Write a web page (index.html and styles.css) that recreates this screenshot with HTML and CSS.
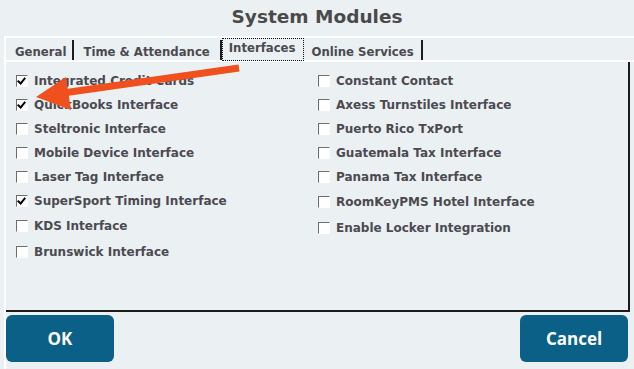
FILE: index.html
```html
<!DOCTYPE html>
<html lang="en">
  <head>
    <meta charset="UTF-8" />
    <title>System Modules</title>
    <link rel="stylesheet" href="styles.css">
  </head>
  <body>
    <div id="dialog">
      <h1 class="title">System Modules</h1>
      <div class="frame">
        <div class="tabs">
          <div class="tab general">General</div>
          <div class="tab time">Time &amp; Attendance</div>
          <div class="tab active">Interfaces</div>
          <div class="tab online">Online Services</div>
        </div>
        <div class="panel">
          <div class="col">
            <label class="opt"><span class="box checked"></span>Integrated Credit Cards</label>
            <label class="opt"><span class="box checked"></span>QuickBooks Interface</label>
            <label class="opt"><span class="box"></span>Steltronic Interface</label>
            <label class="opt"><span class="box"></span>Mobile Device Interface</label>
            <label class="opt"><span class="box"></span>Laser Tag Interface</label>
            <label class="opt"><span class="box checked"></span>SuperSport Timing Interface</label>
            <label class="opt tall"><span class="box"></span>KDS Interface</label>
            <label class="opt tall"><span class="box"></span>Brunswick Interface</label>
          </div>
          <div class="col">
            <label class="opt"><span class="box"></span>Constant Contact</label>
            <label class="opt"><span class="box"></span>Axess Turnstiles Interface</label>
            <label class="opt"><span class="box"></span>Puerto Rico TxPort</label>
            <label class="opt"><span class="box"></span>Guatemala Tax Interface</label>
            <label class="opt"><span class="box"></span>Panama Tax Interface</label>
            <label class="opt tall"><span class="box"></span>RoomKeyPMS Hotel Interface</label>
            <label class="opt tall"><span class="box"></span>Enable Locker Integration</label>
          </div>
          <svg class="arrow" width="240" height="60" viewBox="0 0 240 60">
            <line x1="233" y1="6" x2="50" y2="32" stroke="#f0501e" stroke-width="7" />
            <polygon points="30,35 60,15 65,48" fill="#f0501e" />
          </svg>
        </div>
        <div class="buttons">
          <button class="btn">OK</button>
          <button class="btn">Cancel</button>
        </div>
      </div>
    </div>
  </body>
</html>
```

FILE: styles.css
```css
* {
  padding: 0;
  margin: 0;
  box-sizing: border-box;
}
body {
  width: 634px;
  height: 369px;
  background-color: #ebf0f3;
  color: #4b4a50;
  font-family: Tahoma, "DejaVu Sans", sans-serif;
  overflow: hidden;
}
.title {
  height: 36px;
  text-align: center;
  font-size: 18.5px;
  font-weight: bold;
  line-height: 34px;
  color: #4a4a4a;
}
.frame {
  margin-left: 4px;
  width: 630px;
  height: 333px;
  border-top: 2px solid #fff;
  border-left: 2px solid #fff;
  display: flex;
  flex-direction: column;
}
.tabs {
  display: flex;
  height: 24px;
  padding-left: 8px;
  border-bottom: 2px solid #fff;
}
.tab {
  font-size: 11.7px;
  font-weight: bold;
  padding: 5px 7px 0 7px;
  border-right: 2px solid #1c1c1c;
  margin-top: 2px;
}
.tab.general {
  padding-left: 1px;
  padding-right: 6px;
}
.tab.time {
  padding-left: 9px;
  padding-right: 10px;
}
.tab.active {
  margin-top: 0;
  padding: 2px 8px 0 6px;
  border: 1px dotted #111;
  background-color: #ebf0f3;
  margin-bottom: -1px;
}
.panel {
  position: relative;
  width: 624px;
  height: 250px;
  border-right: 2px solid #1c1c1c;
  border-bottom: 2px solid #1c1c1c;
  display: grid;
  grid-template-columns: 302px 1fr;
  padding: 7px 0 0 10px;
}
.opt {
  display: flex;
  align-items: center;
  height: 24px;
  font-size: 12px;
  font-weight: bold;
}
.opt.tall {
  height: 26px;
}
.box {
  width: 12px;
  height: 12px;
  margin-right: 6px;
  border: 1px solid #6e6e6e;
  border-right-color: #fff;
  border-bottom-color: #fff;
  background-color: #fff;
  position: relative;
}
.box.checked::after {
  content: "";
  position: absolute;
  left: 2px;
  top: 0px;
  width: 3px;
  height: 6px;
  border-right: 2px solid #000;
  border-bottom: 2px solid #000;
  transform: rotate(40deg);
}
.arrow {
  position: absolute;
  left: 0;
  top: 0;
}
.buttons {
  display: flex;
  justify-content: space-between;
  padding: 3px 6px 0 0;
}
.btn {
  width: 108px;
  height: 47px;
  background-color: #0b6087;
  color: #fff;
  border: none;
  border-radius: 6px;
  font-family: "Open Sans", "DejaVu Sans", sans-serif;
  font-size: 17px;
  font-weight: bold;
}
```
